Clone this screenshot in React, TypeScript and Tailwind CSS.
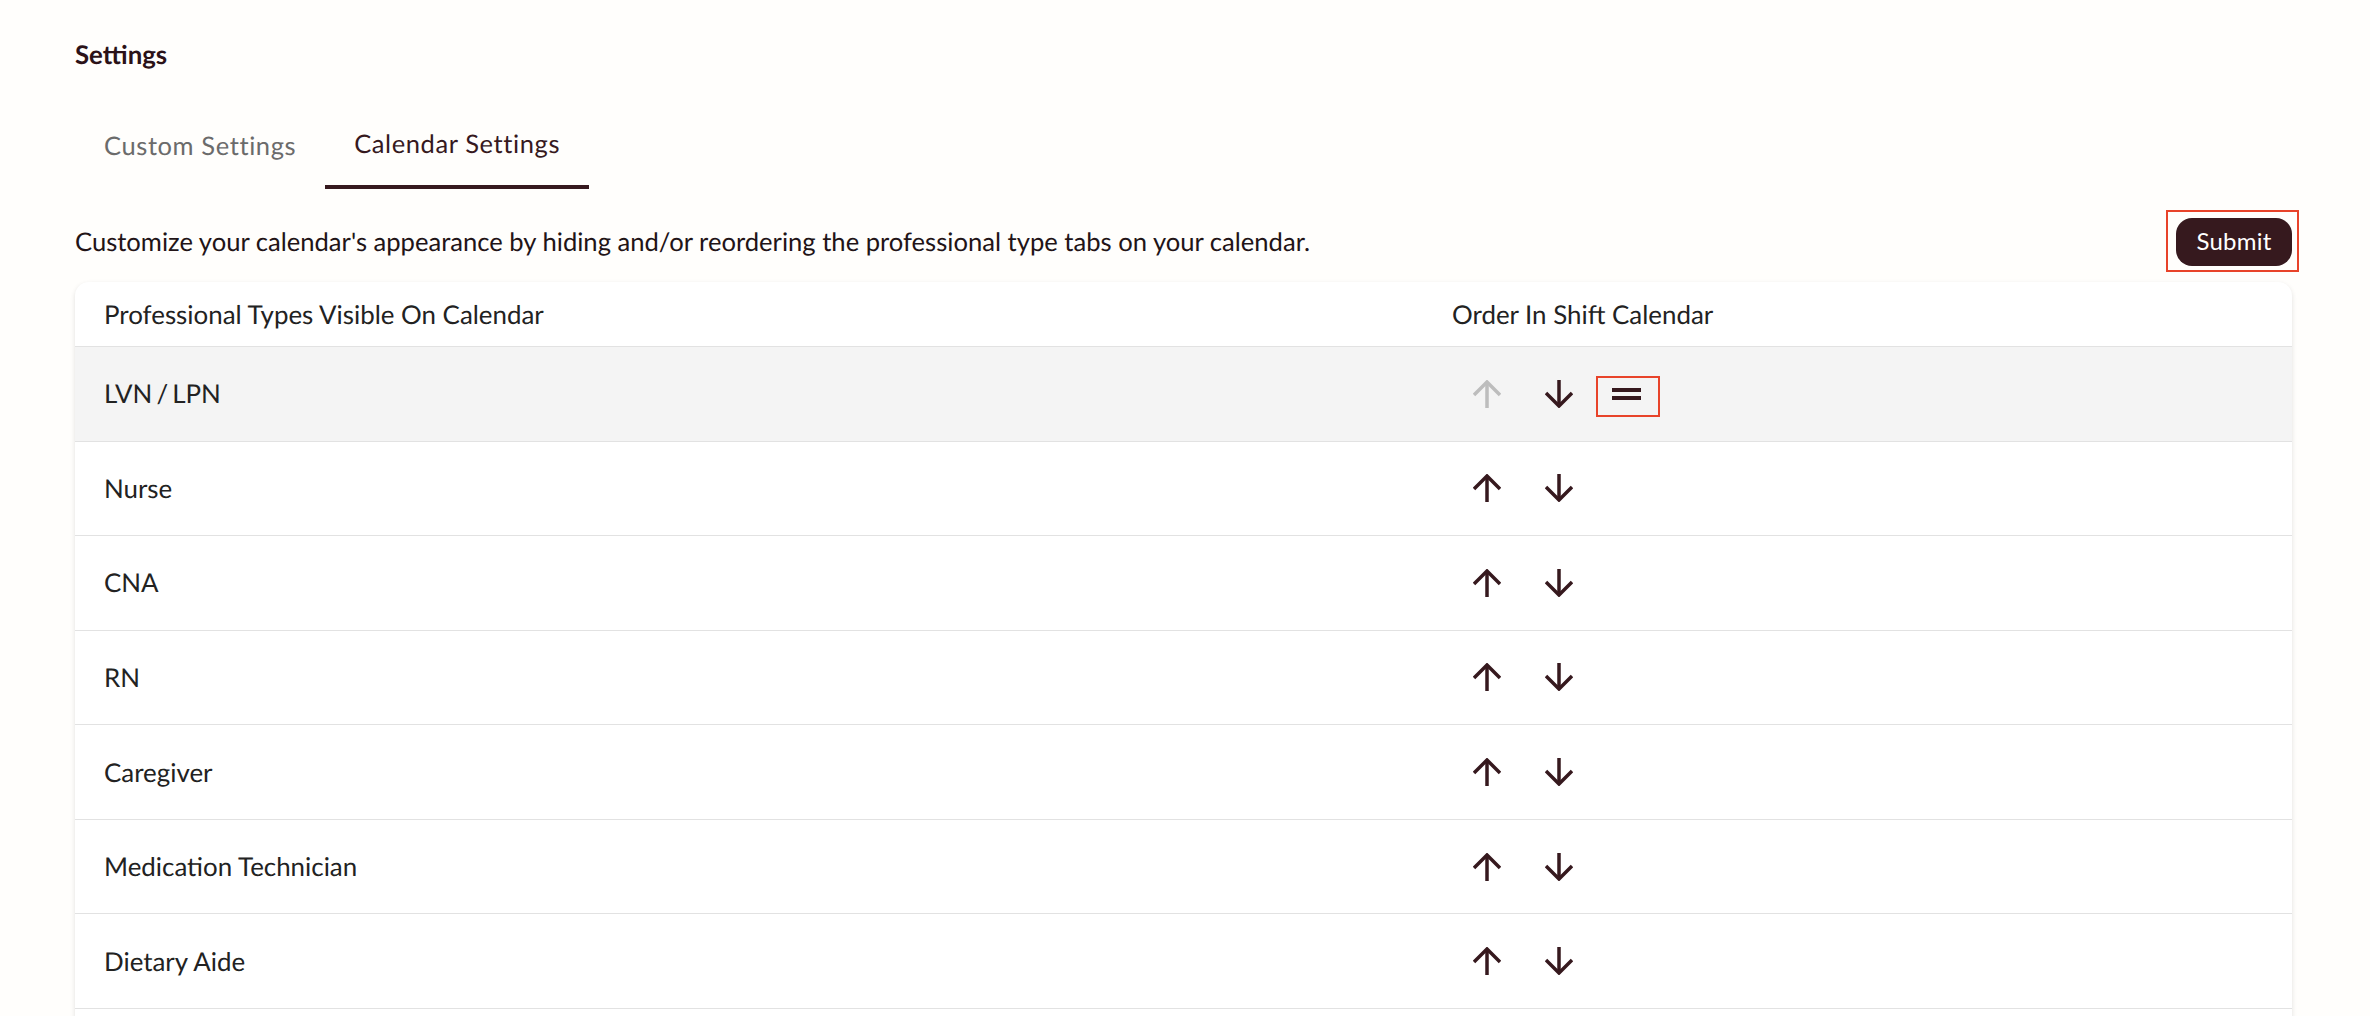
import React from "react";

const ROWS = ["LVN / LPN", "Nurse", "CNA", "RN", "Caregiver", "Medication Technician", "Dietary Aide", ""];

function ArrowIcon({ up, disabled }: { up?: boolean; disabled?: boolean }) {
  return (
    <svg
      width="28"
      height="28"
      viewBox="0 0 28 28"
      fill="none"
      stroke="currentColor"
      strokeWidth="3.5"
      className={disabled ? "text-[#bdbdbd]" : "text-[#36191e]"}
    >
      {up ? (
        <>
          <path d="M14 2v26" />
          <path d="M1 15L14 2l13 13" />
        </>
      ) : (
        <>
          <path d="M14 0v26" />
          <path d="M1 13l13 13 13-13" />
        </>
      )}
    </svg>
  );
}

function Row({ label, index }: { label: string; index: number }) {
  const first = index === 0;
  return (
    <div className={`flex items-center h-[94.57px] border-b-[1.5px] border-[#e2e2e2] ${first ? "bg-[#f4f4f4]" : "bg-white"}`}>
      <div className={`w-[1377px] pl-[29px] text-[25.9px] text-[#222222] ${first ? "[word-spacing:-2.5px]" : ""}`}>{label}</div>
      {label && (
        <div className="flex items-center -ml-[1px]">
          <button className="w-[72px] flex justify-center">
            <ArrowIcon up disabled={first} />
          </button>
          <button className="w-[72px] flex justify-center">
            <ArrowIcon />
          </button>
          {first && (
            <div className="w-[64px] h-[41px] ml-[1px] mt-[6px] pr-[3px] border-2 border-[#e8432a] flex flex-col items-center pt-[10px] gap-[4px]">
              <div className="w-[29px] h-[4px] bg-[#36191e]" />
              <div className="w-[29px] h-[4px] bg-[#36191e]" />
            </div>
          )}
        </div>
      )}
    </div>
  );
}

export default function App() {
  return (
    <div className="h-screen overflow-hidden bg-[#fffefc] pl-[75px] pr-[78px] font-['Lato','Inter',sans-serif] text-[#2b1218] antialiased [text-rendering:geometricPrecision]">
      <h1 className="pt-[40px] text-[25.8px] leading-[30px] font-bold">Settings</h1>

      <div className="mt-[38px] flex">
        <div className="h-[81px] px-[29px] pb-[4px] flex items-center text-[25.5px] tracking-[0.6px] text-[#6b6b6b]">Custom Settings</div>
        <div className="h-[81px] px-[29px] pb-[4px] flex items-center text-[25.5px] tracking-[0.6px] text-[#36191e] border-b-4 border-[#36191e]">
          Calendar Settings
        </div>
      </div>

      <div className="mt-[29px] flex items-center justify-between h-[48px]">
        <p className="text-[25.6px] text-[#221417]">
          Customize your calendar's appearance by hiding and/or reordering the professional type tabs on your calendar.
        </p>
        <button className="relative w-[116px] h-[48px] pb-[2px] rounded-[16px] bg-[#36191e] text-[24px] tracking-[0.2px] text-white">
          Submit
          <span className="absolute -left-[10px] -right-[7px] -top-[8px] -bottom-[6px] border-2 border-[#e8432a]" />
        </button>
      </div>

      <div className="mt-[16px] rounded-t-[14px] bg-white shadow-[0_2px_5px_rgba(0,0,0,0.12)]">
        <div className="flex items-center h-[65px] border-b-[1.5px] border-[#e2e2e2] text-[25.9px] text-[#222222]">
          <div className="w-[1377px] pl-[29px]">Professional Types Visible On Calendar</div>
          <div>Order In Shift Calendar</div>
        </div>
        {ROWS.map((label, i) => (
          <Row key={i} label={label} index={i} />
        ))}
      </div>
    </div>
  );
}
